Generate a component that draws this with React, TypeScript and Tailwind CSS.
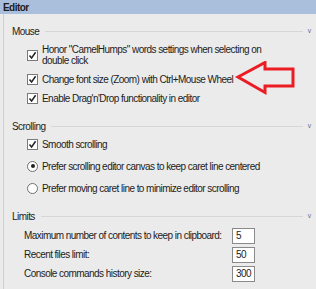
import React from "react";

function Check() {
  return (
    <span className="flex h-[11px] w-[11px] shrink-0 items-center justify-center border border-[#7a7a7a] bg-white">
      <svg width="9" height="9" viewBox="0 0 9 9">
        <path d="M1.5 4.5 L3.6 7 L7.6 1.3" fill="none" stroke="#222" strokeWidth="1.5" />
      </svg>
    </span>
  );
}

function Radio({ on }: { on?: boolean }) {
  return (
    <span className="flex h-[11px] w-[11px] shrink-0 items-center justify-center rounded-full border border-[#6f6f6f] bg-white">
      {on && <span className="h-[4px] w-[4px] rounded-full bg-[#222]" />}
    </span>
  );
}

function Section({ title }: { title: string }) {
  return (
    <div className="flex h-[12px] items-center pl-[8px]">
      <span>{title}</span>
      <span className="ml-[6px] h-px flex-1 bg-[#d6d6d6]" />
      <span className="ml-[5px] text-[5px] leading-[5px] tracking-normal text-[#3a4a7a]">V</span>
      <span className="w-[5px]" />
    </div>
  );
}

export default function App() {
  return (
    <div className="h-[289px] w-[316px] overflow-hidden bg-[#ebebeb] font-['Liberation_Sans',Arial,sans-serif] text-[10px] tracking-[-0.55px] text-[#1c1c1c]">
      <div className="flex h-[14px] items-center bg-[#aabfdc] pl-[3px] font-bold">Editor</div>
      <div className="relative ml-[3px] h-[275px] border-l border-[#cfcfcf]">
        <div className="pt-[11px]">
          <Section title="Mouse" />
        </div>

        <div className="mt-[7px] flex h-[22px] items-center gap-[4px] pl-[23px]">
          <Check />
          <div className="leading-[11px]">
            Honor "CamelHumps" words settings when selecting on
            <br />
            double click
          </div>
        </div>
        <div className="mt-[4px] flex h-[19px] items-center gap-[4px] pl-[23px]">
          <Check />
          <span>Change font size (Zoom) with Ctrl+Mouse Wheel</span>
        </div>
        <div className="flex h-[19px] items-center gap-[4px] pl-[23px]">
          <Check />
          <span>Enable Drag'n'Drop functionality in editor</span>
        </div>

        <div className="mt-[12px]">
          <Section title="Scrolling" />
        </div>
        <div className="mt-[1px] flex h-[22px] items-center gap-[4px] pl-[23px]">
          <Check />
          <span>Smooth scrolling</span>
        </div>
        <div className="flex h-[22px] items-center gap-[4px] pl-[23px]">
          <Radio on />
          <span>Prefer scrolling editor canvas to keep caret line centered</span>
        </div>
        <div className="flex h-[22px] items-center gap-[4px] pl-[23px]">
          <Radio />
          <span>Prefer moving caret line to minimize editor scrolling</span>
        </div>

        <div className="mt-[11px]">
          <Section title="Limits" />
        </div>
        <div className="mt-[4px] flex flex-col">
          {[
            ["Maximum number of contents to keep in clipboard:", "5"],
            ["Recent files limit:", "50"],
            ["Console commands history size:", "300"],
          ].map(([label, value]) => (
            <div key={label} className="flex h-[19px] items-center pl-[20px]">
              <span className="w-[208px]">{label}</span>
              <span className="flex h-[16px] w-[23px] items-center border border-[#8a8a8a] bg-white pl-[3px]">{value}</span>
            </div>
          ))}
        </div>

        <svg className="absolute left-[229px] top-[47px]" width="64" height="36" viewBox="0 0 64 36">
          <polygon points="5,16 32,1.5 32,8 60,8 60,25 32,25 32,31.5" fill="none" stroke="#ec1c24" strokeWidth="3" strokeLinejoin="miter" />
        </svg>
      </div>
    </div>
  );
}
